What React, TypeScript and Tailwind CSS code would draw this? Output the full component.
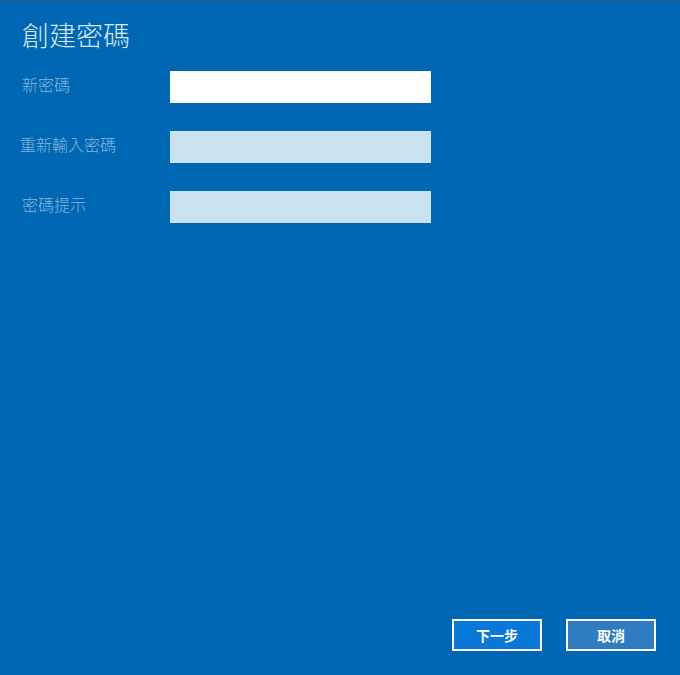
export default function App() {
  const fields = [
    { label: "新密碼", active: true, width: "w-[148px]" },
    { label: "重新輸入密碼", active: false, width: "-ml-[2px] w-[150px]" },
    { label: "密碼提示", active: false, width: "w-[148px]" },
  ];

  return (
    <div
      className="flex h-[675px] w-[680px] flex-col border-t border-[#2a5f8f] bg-[#0067b4] pl-[22px] pr-[24px] pb-[24px]"
      style={{ fontFamily: '"Noto Sans CJK TC", "Noto Sans", sans-serif' }}
    >
      <h1 className="mt-[15px] text-[27px] font-light leading-[38px] text-[#dce8f3]">創建密碼</h1>

      <div className="mt-[17px] flex flex-col gap-[28px]">
        {fields.map((f) => (
          <div key={f.label} className="flex items-center">
            <label className={f.width + " pb-[6px] text-[16px] font-light text-[#86b5dd]"}>
              {f.label}
            </label>
            <input
              type="password"
              className={
                "h-[32px] w-[261px] border-0 outline-none " +
                (f.active ? "bg-white" : "bg-[#cce1f0]")
              }
            />
          </div>
        ))}
      </div>

      <div className="mt-auto flex justify-end gap-[24px]">
        <button className="h-[32px] w-[90px] border-2 border-white bg-[#0a78d6] text-[14px] font-bold text-white">
          下一步
        </button>
        <button className="h-[32px] w-[90px] border-2 border-white bg-[#2f7dc0] text-[14px] font-bold text-white">
          取消
        </button>
      </div>
    </div>
  );
}
